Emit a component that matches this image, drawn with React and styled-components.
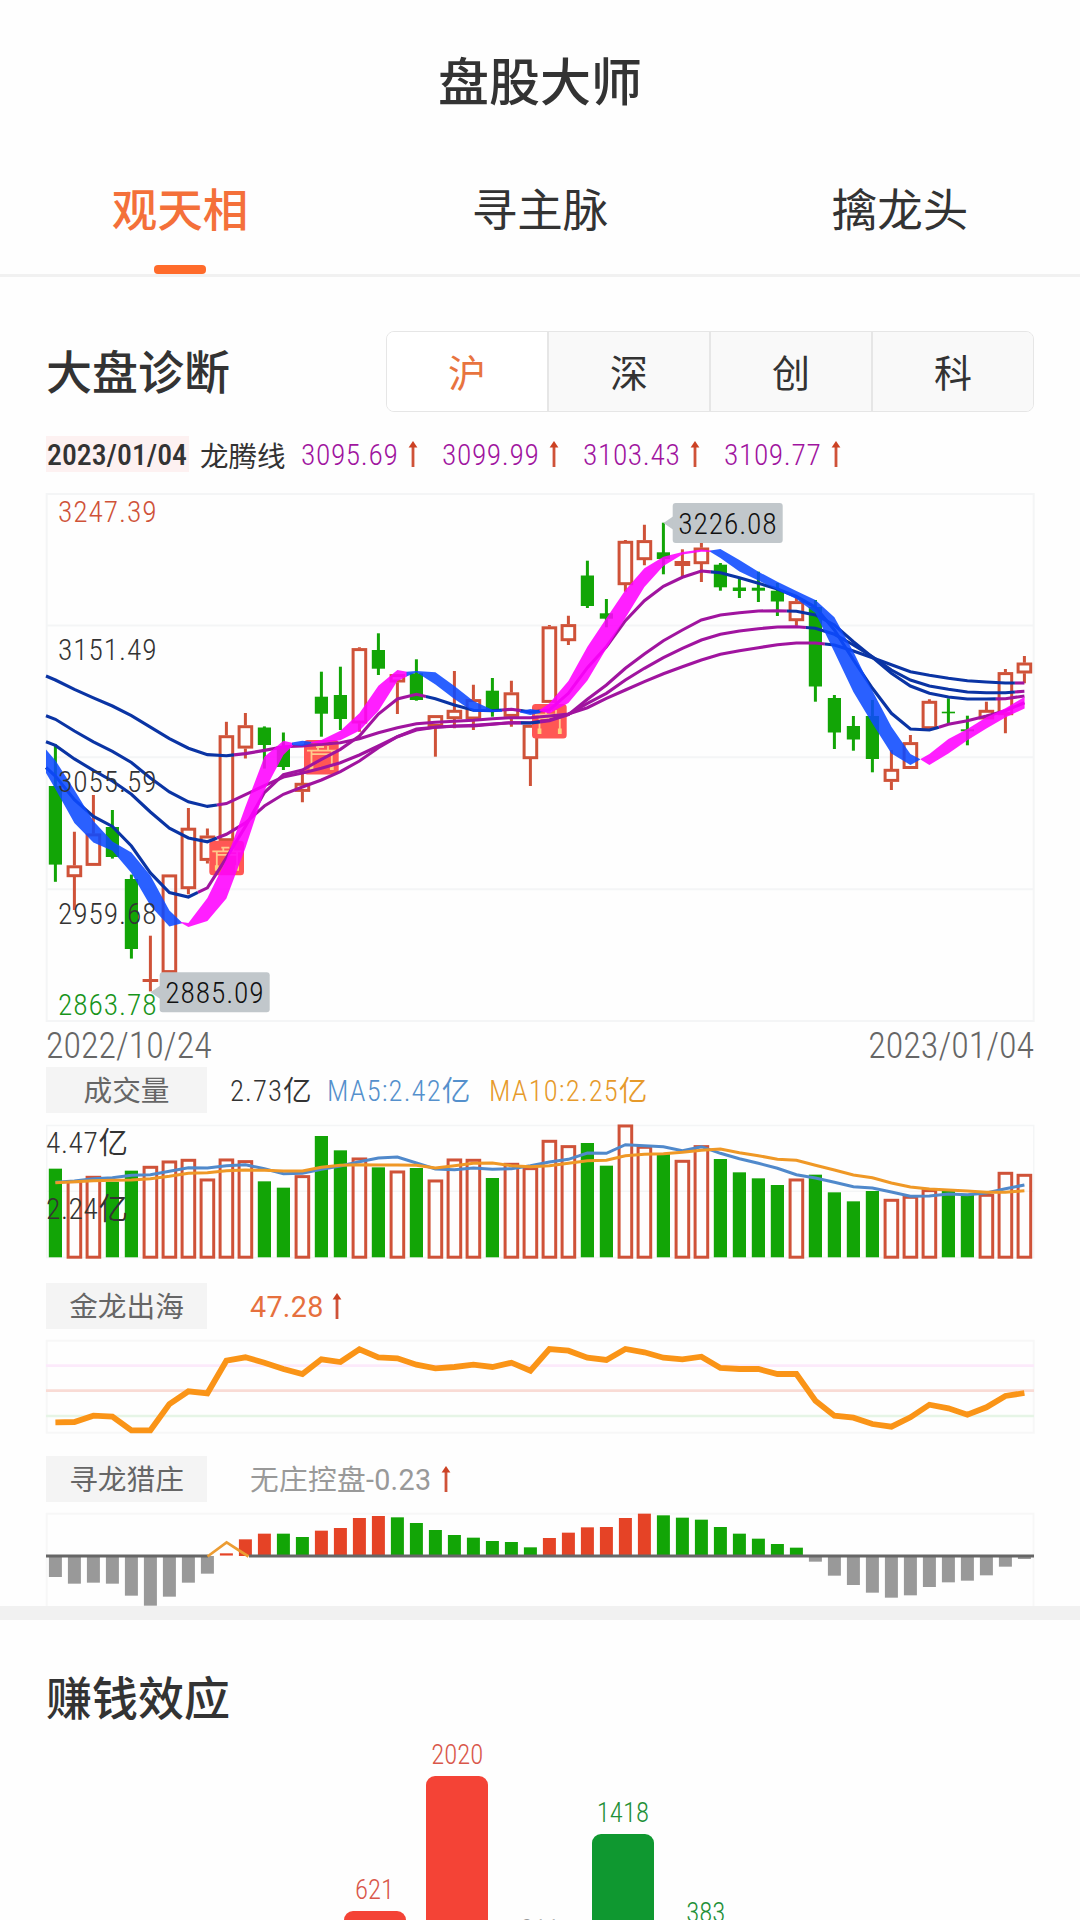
import React, { useState } from "react";
import styled, { createGlobalStyle } from "styled-components";

const RED = "#cf5238";
const GREEN = "#12a506";
const NAVY = "#0a34a4";
const PURPLE = "#a0149f";

const GlobalStyle = createGlobalStyle`
  * {
    box-sizing: border-box;
  }
  body {
    margin: 0;
    background: #fefefe;
    color: #333;
    font-family: Roboto, "Noto Sans CJK SC", sans-serif;
  }
`;

const Page = styled.div`
  width: 1080px;
  height: 1920px;
  overflow: hidden;
  background: #fefefe;
`;

const Header = styled.header`
  height: 160px;
  padding-top: 8px;
  display: flex;
  align-items: center;
  justify-content: center;
  font-size: 51px;
  font-weight: 500;
  line-height: 60px;
`;

const Tabs = styled.nav`
  display: flex;
  height: 117px;
  border-bottom: 3px solid #f1f1f1;
`;

const Tab = styled.div`
  flex: 1;
  display: flex;
  flex-direction: column;
  align-items: center;
  justify-content: space-between;
  padding-top: 22px;
  font-size: 45.5px;
  line-height: 60px;
  font-weight: ${(props) => (props.$active ? 500 : 400)};
  color: ${(props) => (props.$active ? "#f4703a" : "#333")};

  &::after {
    content: "";
    width: 52px;
    height: 9px;
    border-radius: 4px;
    background: ${(props) => (props.$active ? "#ff6b2b" : "transparent")};
  }
`;

const Panel = styled.section`
  padding: 54px 46px 0;
`;

const PanelHead = styled.div`
  display: flex;
  justify-content: space-between;
  align-items: center;
  height: 81px;
`;

const Title = styled.h2`
  margin: 0;
  padding-top: 3px;
  font-size: 46px;
  line-height: 60px;
  font-weight: 500;
`;

const Segments = styled.div`
  display: flex;
  width: 648px;
  height: 81px;
  border: 1.5px solid #e6e6e6;
  border-radius: 8px;
  overflow: hidden;
`;

const Segment = styled.div`
  flex: 1;
  display: flex;
  align-items: center;
  justify-content: center;
  padding-bottom: 2px;
  font-size: 38px;
  color: ${(props) => (props.$active ? "#e8743f" : "#333")};
  background: ${(props) => (props.$active ? "#fff" : "#f9f9f9")};

  & + & {
    border-left: 2px solid #e6e6e6;
  }
`;

const InfoRow = styled.div`
  display: flex;
  align-items: center;
  height: 36px;
  margin: 24px 0 21px;
  font-size: 28.5px;
  white-space: nowrap;
`;

const InfoDate = styled.span`
  width: 143px;
  height: 36px;
  padding-left: 1px;
  line-height: 37px;
  font-size: 29.8px;
  font-weight: 500;
  font-stretch: 75%;
  background: #fdf1f1;
`;

const InfoName = styled.span`
  width: 112px;
  padding-left: 11px;
`;

const InfoValue = styled.span`
  display: flex;
  align-items: center;
  width: 141px;
  font-size: 29.5px;
  font-weight: 350;
  font-stretch: 75%;
  letter-spacing: 0.6px;
  color: ${PURPLE};
`;

const InfoNumber = styled.span`
  width: 107px;
  padding-top: 2px;
`;

const Chart = styled.svg`
  display: block;
  overflow: visible;
`;

const AxisText = styled.text`
  font-size: 29.5px;
  font-weight: 350;
  font-stretch: 75%;
`;

const Dates = styled.div`
  display: flex;
  justify-content: space-between;
  height: 45px;
  padding-top: 1px;
  line-height: 47px;
  font-size: 36px;
  font-weight: 350;
  font-stretch: 75%;
  color: #666;
`;

const LegendRow = styled.div`
  display: flex;
  align-items: center;
  height: 46px;
  font-size: 28.7px;
  white-space: nowrap;
`;

const LegendTag = styled.span`
  width: 161px;
  height: 46px;
  padding-top: 2px;
  line-height: 45px;
  text-align: center;
  color: #666;
  background: #f4f4f4;
`;

const LegendText = styled.span`
  margin-left: ${(props) => props.$left}px;
  width: ${(props) => props.$width}px;
  height: 46px;
  line-height: 48px;
  color: ${(props) => props.$color};
  font-weight: ${(props) => (props.$narrow ? 350 : 400)};
  font-stretch: ${(props) => (props.$narrow ? "75%" : "100%")};
  letter-spacing: ${(props) => (props.$narrow ? 1.1 : 0.3)}px;
`;

const Divider = styled.div`
  height: 14px;
  background: #f1f1f1;
`;

const Effect = styled.section`
  padding: 46px 46px 0;
`;

const Columns = styled.div`
  display: flex;
  align-items: flex-end;
  gap: 20.8px;
  height: 232px;
  margin-top: 10px;
  padding-left: 297.5px;
`;

const Column = styled.div`
  width: 62px;
  flex: none;
  color: ${(props) => props.$color};
`;

const ColumnLabel = styled.div`
  height: 36px;
  line-height: 30px;
  font-size: 26.8px;
  font-weight: 350;
  font-stretch: 75%;
  text-align: center;
`;

const ColumnBar = styled.div`
  height: ${(props) => props.$value * 0.0964}px;
  border-radius: 9px 9px 0 0;
  background: ${(props) => props.$fill};
`;

const cx = (i) => 55.4 + i * 19;
const points = (ys, map = (y) => y) =>
  ys.map((y, i) => `${cx(i)},${map(y).toFixed(1)}`).join(" ");

// color, high, body top, body bottom, low
const candles = [
  ["g", 744.3, 786, 864.6, 881.8],
  ["r", 831.8, 865.5, 877, 910],
  ["r", 795, 833.6, 865.7, 865.7],
  ["g", 810, 827, 857, 858.6],
  ["g", 874.6, 879, 949, 958.6],
  ["r", 935.7, 979, 982, 991.4],
  ["r", 874.6, 874.6, 972.9, 972.9],
  ["r", 807.9, 827.9, 889, 894.3],
  ["r", 828.6, 835.7, 860.7, 863.6],
  ["r", 721.8, 735.4, 841, 841],
  ["r", 712.9, 725.4, 748.4, 758.6],
  ["g", 726.4, 727.5, 745, 768.6],
  ["g", 732.5, 746, 767, 770],
  ["r", 770, 783, 791.7, 802.3],
  ["g", 671.7, 696.7, 713.7, 736.7],
  ["g", 666.7, 695, 719, 730],
  ["r", 647.3, 648.3, 723.3, 731.7],
  ["g", 633.3, 650, 668.7, 675],
  ["r", 674.3, 674.3, 682.3, 714],
  ["g", 659.3, 673.3, 700, 700.7],
  ["r", 715.3, 715.3, 726.7, 756.7],
  ["r", 671, 710, 719, 728.3],
  ["r", 684.7, 699.3, 719.3, 730],
  ["g", 678, 690.7, 710, 716.7],
  ["r", 680.7, 692.5, 716.7, 726.7],
  ["r", 725, 725, 759, 786],
  ["r", 625, 626.5, 702.7, 702.7],
  ["r", 615.7, 624.3, 641, 645],
  ["g", 560.7, 575.5, 606, 608],
  ["g", 599, 613.3, 618.7, 627.3],
  ["r", 540, 541, 585, 591.7],
  ["r", 524.7, 540.3, 560, 565.3],
  ["g", 522.7, 552.3, 559, 574.3],
  ["r", 549.3, 561, 566, 577.3],
  ["r", 542.7, 547.7, 564, 582],
  ["g", 563, 564.7, 587.3, 590.7],
  ["g", 577.7, 587.5, 591, 598],
  ["g", 571.7, 587.7, 590.7, 602],
  ["g", 583, 590.7, 601.5, 616],
  ["r", 598, 601.3, 621, 625.7],
  ["g", 600, 607, 686.5, 701.7],
  ["g", 695, 698, 732.5, 749],
  ["g", 716, 726, 739.5, 750.7],
  ["g", 700, 716, 759, 772.3],
  ["r", 750, 769, 781.7, 790],
  ["r", 735, 742.3, 768.8, 768.8],
  ["r", 699.3, 701, 729, 730.7],
  ["g", 698.3, 711.7, 713.3, 724.3],
  ["g", 715.7, 729.3, 731.3, 745.3],
  ["r", 701.7, 710, 719.3, 719.3],
  ["r", 669, 672.3, 715, 733.3],
  ["r", 656, 662.7, 673.3, 683.3],
];

// each average starts on the left edge; turns lists where the colour flips
const averages = [
  {
    start: 676,
    turns: [9.4, 40.5, 50.5],
    ys: [680, 689.3, 697.9, 706, 715.7, 727.1, 738.6, 748.2, 754.6, 755.7, 753.6, 750.4, 746.8, 746, 744.3, 742.7, 738.7, 732.7, 727.7, 723.7, 722.3, 721.3, 720.3, 718.7, 717.7, 717.7, 716, 714, 707.7, 698.3, 690, 681.7, 673.7, 666.7, 660, 654.3, 650.7, 647.7, 644.7, 643, 643, 645, 651, 657.7, 664.7, 671.7, 675.3, 678.3, 680.7, 682, 683, 683],
  },
  {
    start: 715.7,
    turns: [8.5, 39.5, 50.5],
    ys: [719.3, 731, 741.8, 751.4, 762.5, 777.9, 792, 801.8, 806.4, 803.6, 794.6, 785.7, 777, 773, 768.3, 762.7, 755, 746, 736.7, 729, 727.3, 726.3, 725.3, 724, 722.7, 722.7, 720, 714.3, 703.3, 693.3, 680, 668.3, 657.7, 648.3, 640, 634.3, 631, 628.7, 627, 626.7, 628.3, 634.3, 645, 656.7, 670, 680, 686, 689.3, 692, 692.7, 692.7, 691.3],
  },
  {
    start: 741.8,
    turns: [8.5, 24.5, 25.5, 38.5, 49.5],
    ys: [745.4, 758.9, 770.4, 781, 794.3, 812, 828.2, 837.9, 841.8, 834.3, 822.9, 806, 794.3, 787, 780, 771.7, 761, 747.7, 736.7, 730, 727.3, 726, 726, 724.3, 722.7, 723, 720.7, 714.7, 699.3, 685, 668.3, 654, 640.7, 630, 620, 615, 612.7, 611, 610.7, 611.3, 615, 625, 641.7, 657.3, 673.3, 686, 693.3, 697, 699, 699, 698.7, 696],
  },
  {
    start: 767.5,
    turns: [7.5, 19.5, 23.5, 24.5, 25.5, 34.5, 46.5],
    ys: [776, 799.6, 816.4, 826.4, 846, 872.9, 892.5, 897, 887.9, 857.9, 826.4, 792.5, 774.6, 770, 759.3, 749.3, 736, 714, 699, 694.3, 698.7, 705, 710.3, 710.7, 709.3, 712, 710, 693.3, 667.7, 646.7, 620.7, 600.7, 586.3, 577.3, 571, 572.7, 577.7, 583.3, 589, 596.5, 607.3, 630, 660, 688.3, 713.3, 729, 730, 724.3, 720.7, 716, 710.7, 702.7],
  },
];

// bands are lists of [x, top, bottom]
const bands = [
  ["down", [[46, 749.6, 772.9], [55.4, 760.4, 789], [74.4, 790, 822.9], [93.4, 821, 842.5], [112.4, 841.4, 850.7], [131.4, 852.5, 872.9], [150.4, 875.4, 905.7], [169.4, 910.4, 926.4], [182, 922.5, 923.3]]],
  ["up", [[180, 921.8, 922.2], [188.4, 922.9, 927], [207.4, 897.9, 921], [226.4, 859.3, 898.6], [245.4, 806.8, 847.9], [264.4, 756.8, 790.7], [283.4, 740.7, 755], [293, 743, 745.5]]],
  ["down", [[292, 742.5, 745], [302.4, 740.7, 746], [313, 742, 743]]],
  ["up", [[311, 742, 743], [321.4, 740, 743.3], [340.4, 730.7, 740.3], [359.4, 713.3, 730.7], [378.4, 685.7, 711], [397.4, 670, 681], [407, 671.7, 676.5]]],
  ["down", [[406.6, 671.7, 676.5], [416.4, 671, 672.3], [435.4, 672.3, 684.5], [454.4, 686, 699], [473.4, 701, 711.7], [492.4, 709.7, 712], [502, 709.7, 711.7]]],
  ["down", [[520, 711, 712.4], [530.4, 709, 715], [540.4, 710.5, 713]]],
  ["up", [[539.5, 710, 711], [549.4, 703.3, 713.5], [568.4, 681, 703], [587.4, 646.7, 680.5], [606.4, 618.3, 648.5], [625.4, 590, 618], [644.4, 568.3, 587], [663.4, 556.7, 566], [682.4, 552, 554.6], [701.4, 549.5, 551.7], [711, 550.5, 552]]],
  ["down", [[710.5, 550.5, 552], [720.4, 549, 558], [739.4, 560, 571.5], [758.4, 571.7, 580.5], [777.4, 581.7, 590], [796.4, 591, 599], [815.4, 600, 613], [834.4, 617.3, 652], [853.4, 651.7, 692], [872.4, 690.7, 723.5], [891.4, 726.7, 753.5], [910.4, 754, 765], [920, 759, 759.8]]],
  ["up", [[920.5, 759, 759.6], [929.4, 754, 765], [948.4, 739, 753.5], [967.4, 729, 740.3], [986.4, 717.3, 728.5], [1005.4, 708.3, 717.5], [1024.6, 696.7, 708.5]]],
];

const badges = [
  [209.3, 840.7],
  [304, 740],
  [532, 704],
];

const axisLabels = [
  ["3247.39", 522, RED],
  ["3151.49", 659.6, "#333"],
  ["3055.59", 791.8, "#333"],
  ["2959.68", 923.6, "#333"],
  ["2863.78", 1014.5, "#17941a"],
];

const volumeKinds = "grrggrrrrrrggrggrgrgrrrgrrrrggrrgrrggggrggggrrrggrrr";
const volumes = [
  506, 541, 528, 545, 512, 498, 482, 477, 536, 476, 481, 544, 563, 526, 408, 451, 473, 502, 512, 504, 539, 476, 477, 534, 489, 502, 420, 436, 429, 497, 374, 438, 460, 480, 436, 477, 517, 535, 555, 536, 524, 577, 604, 573, 597, 588, 568, 573, 583, 582, 516, 522,
];
const ma5 = [
  547, 543, 536, 533, 526, 524, 514, 503, 504, 497, 494, 506, 521, 520, 508, 498, 485, 474, 471, 489, 507, 509, 504, 508, 506, 497, 486, 478, 459, 460, 434, 437, 440, 452, 440, 460, 476, 490, 505, 524, 534, 547, 560, 564, 576, 589, 588, 582, 584, 579, 566, 555,
];
const ma10 = [
  548, 545, 542, 541, 540, 536, 529, 520, 518, 512, 510, 511, 513, 513, 502, 496, 494, 495, 495, 496, 504, 497, 490, 489, 497, 500, 497, 490, 482, 481, 467, 463, 461, 457, 451, 447, 458, 467, 478, 481, 496, 510, 525, 533, 549, 561, 567, 570, 573, 577, 577, 572,
];
const dragon = [
  457, 456, 437, 440, 481, 481, 402, 364, 370, 272, 262, 278, 297, 312, 268, 276, 238, 262, 265, 284, 295, 291, 284, 291, 278, 302, 237, 242, 263, 270, 237, 247, 263, 268, 260, 294, 297, 297, 312, 312, 392, 437, 443, 462, 470, 442, 404, 415, 434, 412, 378, 369,
];
const hunterKinds = "nnnnnnnnnrrrggrrrrggggggggrrrrrrggggggggnnnnnnnnnnnn";
const hunter = [
  921, 941, 938, 941, 977, 1007, 980, 938, 911, 850, 808, 791, 791, 801, 782, 774, 744, 738, 742, 759, 780, 795, 803, 813, 816, 832, 804, 788, 772, 771, 744, 731, 736, 743, 749, 771, 791, 806, 822, 833, 875, 917, 945, 968, 983, 976, 951, 937, 932, 916, 890, 867,
];
const hunterFill = { n: "#999", r: "#e54326", g: GREEN };

const effects = [
  { value: 621, color: "#d9574a", fill: "#f44336" },
  { value: 2020, color: "#d9574a", fill: "#f44336" },
  { value: 211, color: "#999", fill: "#999" },
  { value: 1418, color: "#1f9038", fill: "#0f9830" },
  { value: 383, color: "#1f9038", fill: "#0f9830" },
];

const UpArrow = () => (
  <svg width="10" height="26" viewBox="0 0 10 26">
    <path d="M5 4V26" stroke={RED} strokeWidth="2.8" fill="none" />
    <path d="M5 0L9.4 6.5H0.6Z" fill="#cc4123" />
  </svg>
);

const ChartText = ({ x, y, width, fill, children }) => (
  <AxisText x={x} y={y} fill={fill} textLength={width} lengthAdjust="spacing">
    {children}
  </AxisText>
);

const Candle = ({ index, data }) => {
  const [kind, high, top, bottom, low] = data;
  const x = cx(index);
  if (kind === "g") {
    return (
      <g fill={GREEN}>
        <rect x={x - 1.5} y={high} width="3" height={low - high} />
        <rect x={x - 6.6} y={top} width="13.2" height={bottom - top} />
      </g>
    );
  }
  if (bottom - top < 6) {
    return (
      <g fill={RED}>
        <rect x={x - 1.5} y={high} width="3" height={low - high} />
        <rect x={x - 7.8} y={top} width="15.6" height={bottom - top} />
      </g>
    );
  }
  return (
    <g fill="none" stroke={RED} strokeWidth="3">
      <path d={`M${x} ${high}V${top}M${x} ${bottom}V${low}`} />
      <rect x={x - 6.3} y={top + 1.3} width="12.6" height={bottom - top - 2.6} />
    </g>
  );
};

// splits an average into runs of one colour
const averageRuns = ({ start, turns, ys }) => {
  const at = (p) => {
    const i = Math.floor(p);
    return i >= ys.length - 1 ? ys[ys.length - 1] : ys[i] + (ys[i + 1] - ys[i]) * (p - i);
  };
  const stops = [0, ...turns, ys.length - 1];
  const runs = [];
  for (let k = 0; k < stops.length - 1; k++) {
    const run = k === 0 ? [`46,${start}`] : [];
    run.push(`${cx(stops[k])},${at(stops[k])}`);
    for (let i = Math.floor(stops[k]) + 1; i < stops[k + 1]; i++) {
      run.push(`${cx(i)},${ys[i]}`);
    }
    run.push(`${cx(stops[k + 1])},${at(stops[k + 1])}`);
    runs.push({ color: k % 2 ? PURPLE : NAVY, run: run.join(" ") });
  }
  return runs;
};

const bandPoints = (rows) =>
  [...rows.map(([x, t]) => `${x},${t}`), ...[...rows].reverse().map(([x, , b]) => `${x},${b}`)].join(" ");

const Callout = ({ x, y, tip, children }) => (
  <g>
    <path d={`M${tip} ${y + 20}L${x + 1} ${y + 13}V${y + 27}Z`} fill="#c1c7cb" />
    <rect x={x} y={y} width="110" height="40" rx="3" fill="#c1c7cb" />
    <ChartText x={x + 5.5} y={y + 30.8} width={98.5} fill="#111">
      {children}
    </ChartText>
  </g>
);

const PriceChart = () => (
  <Chart width="988" height="529" viewBox="46 493 988 529">
    <g stroke="#f4f5f6" strokeWidth="2" fill="none">
      <rect x="46.7" y="494" width="987" height="527" />
      <path d="M46 625.5H1034M46 757.3H1034M46 889.2H1034" />
    </g>
    {candles.map((data, i) => (
      <Candle key={i} index={i} data={data} />
    ))}
    {badges.map(([x, y]) => (
      <g key={x} transform={`translate(${x} ${y})`}>
        <rect width="34.7" height="34.5" rx="3.5" fill="#ff5754" />
        <g stroke="#ffc98c" fill="none">
          <path d="M3 10.7H32M14 6V10.7M24 6V10.7M12 7H20" strokeWidth="1.8" />
          <path d="M7.5 10.7V28M27.8 10.7V28M7.5 14.2H27.8" strokeWidth="1.8" />
          <path d="M7.5 24.5V30M27.8 24.5V30" strokeWidth="3.8" stroke="#ffd27d" />
        </g>
      </g>
    ))}
    {averages.map((avg) =>
      averageRuns(avg).map(({ color, run }) => (
        <polyline key={run} points={run} fill="none" stroke={color} strokeWidth="3.1" />
      ))
    )}
    {bands.map(([kind, rows]) => (
      <polygon
        key={rows[0][0]}
        points={bandPoints(rows)}
        fill={kind === "up" ? "#ff00ff" : "#0d4aff"}
        fillOpacity="0.88"
      />
    ))}
    {axisLabels.map(([label, y, color]) => (
      <ChartText key={label} x={58} y={y} width={98.5} fill={color}>
        {label}
      </ChartText>
    ))}
    <Callout x={672.7} y={503} tip={663.5}>3226.08</Callout>
    <Callout x={159.7} y={972.2} tip={150.5}>2885.09</Callout>
  </Chart>
);

const VolumeChart = () => {
  const y = (v) => 1000 + v / 3;
  return (
    <Chart width="988" height="170" viewBox="46 1113 988 170">
      <g stroke="#f4f5f6" strokeWidth="1.5" fill="none">
        <rect x="46.7" y="1125.5" width="987" height="132" />
        <path d="M46 1191.3H1034" />
      </g>
      {volumes.map((v, i) =>
        volumeKinds[i] === "g" ? (
          <rect key={i} x={cx(i) - 6.6} y={y(v)} width="13.2" height={1257.3 - y(v)} fill={GREEN} />
        ) : (
          <rect
            key={i}
            x={cx(i) - 6.3}
            y={y(v) + 1.3}
            width="12.6"
            height={1257.2 - y(v) - 1.3}
            fill="none"
            stroke={RED}
            strokeWidth="3"
          />
        )
      )}
      <polyline points={points(ma5, y)} fill="none" stroke="#5089cb" strokeWidth="3" />
      <polyline points={points(ma10, y)} fill="none" stroke="#ef9826" strokeWidth="3" />
      <ChartText x={46} y={1153} width={82} fill="#333">4.47亿</ChartText>
      <ChartText x={46} y={1218.7} width={82} fill="#333">2.24亿</ChartText>
    </Chart>
  );
};

const DragonChart = () => (
  <Chart width="988" height="127" viewBox="46 1329 988 127">
    <rect x="46.7" y="1340.7" width="987" height="92" fill="none" stroke="#f7f7f7" strokeWidth="2" />
    <g strokeWidth="2.7">
      <path d="M46 1365.6H1034" stroke="#fceafb" />
      <path d="M46 1390.6H1034" stroke="#f9dbd5" />
      <path d="M46 1416H1034" stroke="#e6f5e6" />
    </g>
    <polyline points={points(dragon, (v) => 1270 + v / 3)} fill="none" stroke="#fa9417" strokeWidth="5.8" />
  </Chart>
);

const HunterChart = () => (
  <Chart width="988" height="104" viewBox="46 1502 988 104">
    <path d="M46.7 1606V1513.7H1033.5V1606" fill="none" stroke="#f7f7f7" strokeWidth="2" />
    {hunter.map((v, i) => {
      const y = 1270 + v / 3;
      const kind = hunterKinds[i];
      return (
        <rect
          key={i}
          x={cx(i) - 6.5}
          y={Math.min(y, 1556)}
          width="13"
          height={i === 9 ? 2.2 : Math.abs(y - 1556)}
          fill={hunterFill[kind]}
        />
      );
    })}
    <path d="M46 1556H208M249 1556H1034" stroke="#666" strokeWidth="2.9" />
    <path d="M207.5 1556.5L226.6 1542.3L248.5 1556.5" fill="none" stroke="#ec9c33" strokeWidth="2.7" />
  </Chart>
);

const App = () => {
  const [tab, setTab] = useState("观天相");
  const [market, setMarket] = useState("沪");

  return (
    <Page>
      <GlobalStyle />
      <Header>盘股大师</Header>
      <Tabs>
        {["观天相", "寻主脉", "擒龙头"].map((name) => (
          <Tab key={name} $active={name === tab} onClick={() => setTab(name)}>
            {name}
          </Tab>
        ))}
      </Tabs>
      <Panel>
        <PanelHead>
          <Title>大盘诊断</Title>
          <Segments>
            {["沪", "深", "创", "科"].map((name) => (
              <Segment key={name} $active={name === market} onClick={() => setMarket(name)}>
                {name}
              </Segment>
            ))}
          </Segments>
        </PanelHead>
        <InfoRow>
          <InfoDate>2023/01/04</InfoDate>
          <InfoName>龙腾线</InfoName>
          {["3095.69", "3099.99", "3103.43", "3109.77"].map((value) => (
            <InfoValue key={value}>
              <InfoNumber>{value}</InfoNumber>
              <UpArrow />
            </InfoValue>
          ))}
        </InfoRow>
        <PriceChart />
        <Dates>
          <span>2022/10/24</span>
          <span>2023/01/04</span>
        </Dates>
        <LegendRow>
          <LegendTag>成交量</LegendTag>
          <LegendText $left={23} $width={97} $color="#333" $narrow>2.73亿</LegendText>
          <LegendText $left={0} $width={162} $color="#5590cc" $narrow>MA5:2.42亿</LegendText>
          <LegendText $left={0} $width={170} $color="#e69a2b" $narrow>MA10:2.25亿</LegendText>
        </LegendRow>
        <VolumeChart />
        <LegendRow>
          <LegendTag>金龙出海</LegendTag>
          <LegendText $left={43} $width={82} $color="#e6703e">47.28</LegendText>
          <UpArrow />
        </LegendRow>
        <DragonChart />
        <LegendRow>
          <LegendTag>寻龙猎庄</LegendTag>
          <LegendText $left={43} $width={191} $color="#999">无庄控盘-0.23</LegendText>
          <UpArrow />
        </LegendRow>
        <HunterChart />
      </Panel>
      <Divider />
      <Effect>
        <Title>赚钱效应</Title>
        <Columns>
          {effects.map(({ value, color, fill }) => (
            <Column key={value} $color={color}>
              <ColumnLabel>{value}</ColumnLabel>
              <ColumnBar $value={value} $fill={fill} />
            </Column>
          ))}
        </Columns>
      </Effect>
    </Page>
  );
};

export default App;
